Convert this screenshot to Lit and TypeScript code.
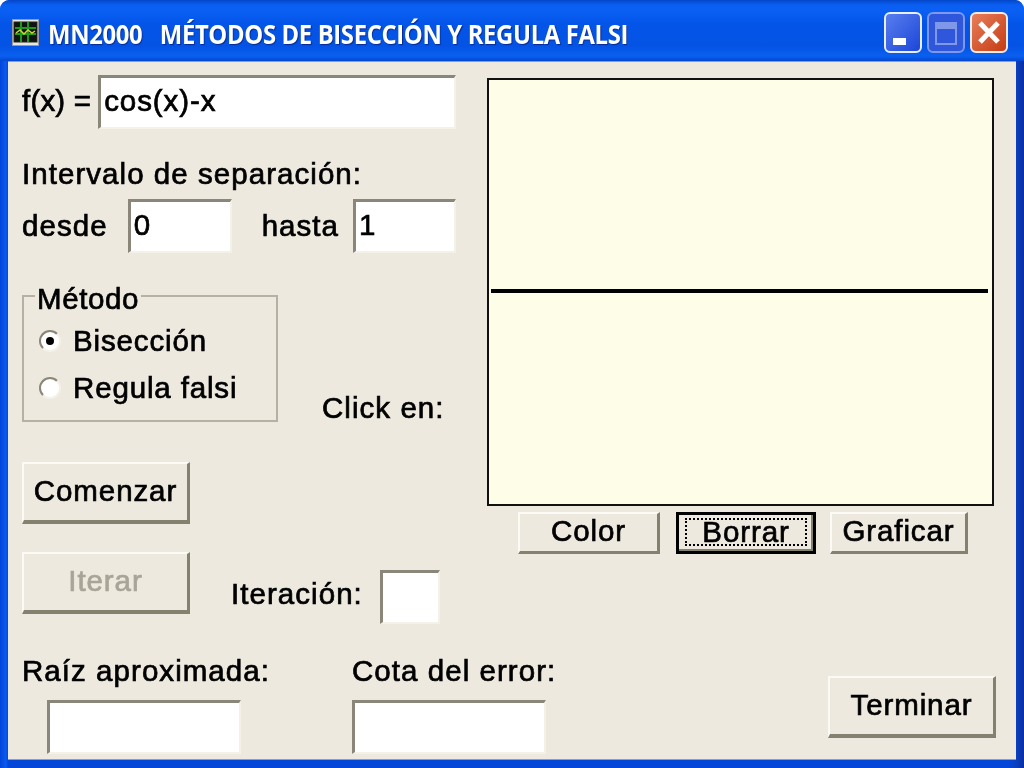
import { LitElement, html, css } from "lit";
import { customElement } from "lit/decorators.js";

@customElement("app-root")
export class AppRoot extends LitElement {
  static styles = css`
    :host { display: block; width: 1024px; height: 768px; overflow: hidden; font-family: "Liberation Sans", Arial, sans-serif; color: #000; }
    .win { width: 1024px; height: 768px; box-sizing: border-box; display: flex; flex-direction: column; border-radius: 10px 10px 0 0; background-color: #0552e6; position: relative; }
    .title { height: 61px; flex: none; display: flex; align-items: center; box-sizing: border-box; padding: 5px 0 0 12px; background: linear-gradient(#0346c8 0, #0a5ff2 5px, #0b60f4 10px, #0355e8 24px, #0453e4 46px, #0a60f0 56px, #0447d0 61px); border-radius: 9px 9px 0 0; }
    .appicon { width: 28px; height: 28px; flex: none; }
    .ttext { margin-left: 8px; color: #fff; font: 700 27px/1 "Open Sans", sans-serif; white-space: pre; letter-spacing: -0.4px; transform: scaleX(0.883); transform-origin: left center; text-shadow: 1px 1px 1px #0a2a90; flex: none; width: 640px; }
    .ctrls { margin-left: auto; margin-right: 16px; display: flex; gap: 5px; margin-top: -2px; }
    .ctrl { width: 38px; height: 41px; flex: none; display: block; }
    .frame { flex: 1; display: flex; min-height: 0; padding: 0 8px 8px; background: linear-gradient(90deg, #0346d8 0, #0a5cf2 6px, #0346d8 8px, #0346d8 1008px, #0a40c0 1016px, #0a2ea0 1024px); }
    .body { flex: 1; background: #ede9df; border-top: 1px solid #7d9bf0; border-bottom: 1px solid #7d9bf0; box-sizing: border-box; padding: 13px 20px 0 14px; display: flex; flex-direction: column; -webkit-text-stroke: 0.7px currentColor; filter: blur(0.5px); }
    .top { display: flex; height: 547px; flex: none; }
    .left { width: 465px; flex: none; display: flex; flex-direction: column; }
    .lbl { font-size: 29.5px; line-height: 34px; white-space: nowrap; letter-spacing: 1.05px; }
    .row { display: flex; align-items: center; }
    .input { box-sizing: border-box; background: #fff; height: 54px; border-style: solid; border-width: 3px 2px 2px 3px; border-color: #8a867a #f4f2e8 #f4f2e8 #8a867a; font-size: 29.5px; line-height: 46px; padding: 0 3px; letter-spacing: 0.9px; flex: none; }
    .fx { width: 358px; margin-left: 7px; }
    .fxlbl { margin-top: -2px; letter-spacing: 0.2px; }
    .intlabel { margin-top: 28px; }
    .interval { margin-top: 8px; }
    .from { margin-left: 20px; }
    .to-lbl { margin-left: 30px; }
    .to { margin-left: 14px; width: 103px; }
    .i60 { width: 104px; }
    .group { position: relative; box-sizing: border-box; width: 256px; height: 127px; margin-top: 42px; border: 2px solid #b5b2a4; padding: 20px 0 0 15px; flex: none; }
    .legend { position: absolute; left: 11px; top: -15px; background: #ede9df; padding: 0 2px; font-size: 29.5px; line-height: 34px; letter-spacing: 0.6px; }
    .radio { display: flex; align-items: center; height: 47px; font-size: 29.5px; letter-spacing: 0.85px; }
    .dot { width: 22px; height: 22px; flex: none; margin-right: 12px; border-radius: 50%; background: #fff; box-sizing: border-box; border: 2px solid; border-color: #8a8678 #f4f2e8 #f4f2e8 #8a8678; display: flex; align-items: center; justify-content: center; }
    .dot i { width: 8px; height: 8px; background: #000; border-radius: 50%; }
    .metodo { display: flex; align-items: flex-start; }
    .click { margin: 138px 0 0 44px; }
    .btn { box-sizing: border-box; width: 168px; height: 62px; background: #ede9df; font-size: 29.5px; display: flex; align-items: center; justify-content: center; letter-spacing: 0.9px; flex: none; border-style: solid; border-width: 2px 3px 4px 2px; border-color: #fbfaf4 #85816f #85816f #fbfaf4; padding-bottom: 2px; }
    .dis { color: #a8a598; }
    .comenzar { margin-top: 37px; }
    .iter { margin-top: 28px; align-items: flex-start; }
    .iter .lbl { margin: 25px 0 0 41px; }
    .ibox { width: 60px; margin: 18px 0 0 17px; }
    .right { display: flex; flex-direction: column; width: 507px; flex: none; margin-left: 0; }
    .plot { box-sizing: border-box; width: 507px; height: 428px; margin-top: 3px; background: #fefee8; border: 2px solid #111; display: flex; flex-direction: column; justify-content: center; padding: 0 4px 2px 2px; flex: none; }
    .plot div { height: 4px; background: #000; }
    .pbtns { display: flex; margin-top: 6px; padding-left: 31px; }
    .sm { width: 142px; height: 42px; border-width: 2px 3px 3px 2px; padding-bottom: 3px; }
    .focus { margin-left: 16px; width: 140px; border: 3px solid #000; position: relative; box-shadow: inset -2px -2px 0 #85816f; }
    .focus::after { content: ""; position: absolute; inset: 3px 6px 5px 6px; border: 2px dotted #000; }
    .gra { margin-left: 14px; width: 138px; }
    .bottom { display: flex; margin-top: 32px; }
    .col { display: flex; flex-direction: column; flex: none; }
    .c1 { width: 330px; }
    .c1 .input { width: 194px; margin-left: 25px; }
    .c2 { width: 476px; }
    .c2 .input { width: 194px; }
    .input.last { margin-top: 12px; }
    .term { margin-top: 22px; }
  `;

  render() {
    return html`<div class="win">
      <div class="title">
        <svg class="appicon" viewBox="0 0 28 28">
          <rect x="0.5" y="0.5" width="26" height="26" fill="#e8e8e0" stroke="#999"/>
          <rect x="2" y="3" width="23" height="20" fill="#101410" stroke="#222"/>
          <path d="M3 9h21M3 15h21M9 3v20M16 3v20" stroke="#1c9a1c" stroke-width="2"/>
          <path d="M4 14l4-3 4 4 4-4 4 3 3-2" stroke="#c8d838" stroke-width="1.5" fill="none"/>
        </svg>
        <div class="ttext">MN2000   MÉTODOS DE BISECCIÓN Y REGULA FALSI</div>
        <div class="ctrls">
          <svg class="ctrl" viewBox="0 0 38 41"><defs><linearGradient id="b" x1="0" y1="0" x2="1" y2="1"><stop offset="0" stop-color="#5a80ee"/><stop offset="1" stop-color="#1a44d8"/></linearGradient></defs><rect x="1" y="1" width="36" height="39" rx="5" fill="url(#b)" stroke="#e8eefc" stroke-width="2"/><rect x="9" y="26" width="13" height="7" fill="#fff"/></svg>
          <svg class="ctrl" viewBox="0 0 38 41"><rect x="1" y="1" width="36" height="39" rx="5" fill="#2f57dc" stroke="#7d98ee" stroke-width="2"/><rect x="9" y="11" width="20" height="21" fill="none" stroke="#7f98ea" stroke-width="2"/><rect x="9" y="11" width="20" height="6" fill="#7f98ea"/></svg>
          <svg class="ctrl" viewBox="0 0 38 41"><defs><linearGradient id="r" x1="0" y1="0" x2="1" y2="1"><stop offset="0" stop-color="#e8805c"/><stop offset="1" stop-color="#c53a12"/></linearGradient></defs><rect x="1" y="1" width="36" height="39" rx="5" fill="url(#r)" stroke="#f2ece8" stroke-width="2"/><path d="M10 11l18 19M28 11l-18 19" stroke="#fff" stroke-width="5"/></svg>
        </div>
      </div>
      <div class="frame"><div class="body">
        <div class="top">
          <div class="left">
            <div class="row"><span class="lbl fxlbl">f(x) =</span><div class="input fx">cos(x)-x</div></div>
            <div class="lbl intlabel">Intervalo de separación:</div>
            <div class="row interval">
              <span class="lbl">desde</span><div class="input i60 from">0</div>
              <span class="lbl to-lbl">hasta</span><div class="input to">1</div>
            </div>
            <div class="metodo">
              <div class="group">
                <div class="legend">Método</div>
                <div class="radio"><span class="dot"><i></i></span>Bisección</div>
                <div class="radio"><span class="dot"></span>Regula falsi</div>
              </div>
              <div class="lbl click">Click en:</div>
            </div>
            <div class="btn comenzar">Comenzar</div>
            <div class="row iter">
              <div class="btn dis">Iterar</div>
              <span class="lbl">Iteración:</span>
              <div class="input ibox"></div>
            </div>
          </div>
          <div class="right">
            <div class="plot"><div></div></div>
            <div class="pbtns">
              <div class="btn sm">Color</div>
              <div class="btn sm focus">Borrar</div>
              <div class="btn sm gra">Graficar</div>
            </div>
          </div>
        </div>
        <div class="bottom">
          <div class="col c1"><span class="lbl">Raíz aproximada:</span><div class="input last"></div></div>
          <div class="col c2"><span class="lbl">Cota del error:</span><div class="input last"></div></div>
          <div class="btn term">Terminar</div>
        </div>
      </div></div>
    </div>`;
  }
}
